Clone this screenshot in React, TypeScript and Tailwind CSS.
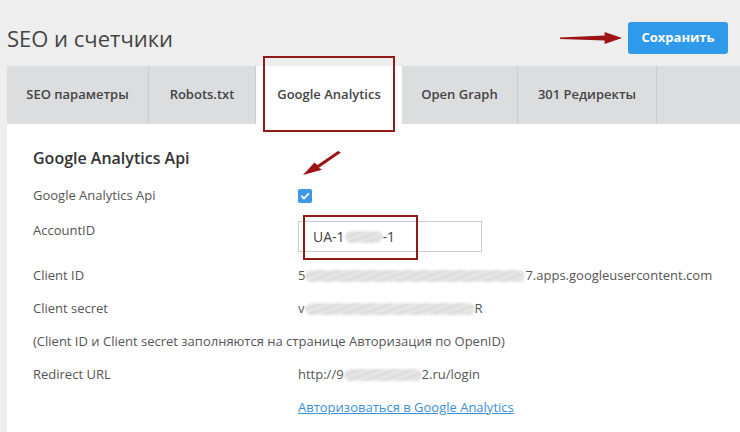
import React from 'react';

const font = { fontFamily: '"Open Sans", "Noto Sans", sans-serif' };

// blurred-out (redacted) piece of a value
function Smudge({ w }: { w: number }) {
  return (
    <span
      className="inline-block h-[12px] align-middle rounded-full bg-[repeating-linear-gradient(160deg,#d6d6d6_0px,#ececec_3px,#dadada_6px)] blur-[1px]"
      style={{ width: w }}
    />
  );
}

function RedArrow({ className, d }: { className: string; d: string }) {
  return (
    <svg className={className} viewBox="0 0 100 100" preserveAspectRatio="none">
      <path d={d} fill="#9c1414" />
    </svg>
  );
}

const tabs = [
  { label: 'SEO параметры', w: 'w-[142px]' },
  { label: 'Robots.txt', w: 'w-[107px]' },
  { label: 'Google Analytics', w: 'w-[146px]', active: true },
  { label: 'Open Graph', w: 'w-[116px]' },
  { label: '301 Редиректы', w: 'w-[139px]' },
];

function Row({ label, children, h = 'h-[33px]' }: { label: string; children?: React.ReactNode; h?: string }) {
  return (
    <div className={`flex items-center ${h}`}>
      <div className="w-[265px] shrink-0 text-[13px] text-[#555]">{label}</div>
      <div className="flex items-center text-[13px] text-[#555]">{children}</div>
    </div>
  );
}

export default function App() {
  return (
    <div className="w-[740px] h-[432px] overflow-hidden bg-[#eeeeee]" style={font}>
      {/* Header */}
      <div className="flex items-center justify-between h-[66px] pl-[7px] pr-[12px] pt-[14px] pb-[4px]">
        <h1 className="text-[22px] text-[#444] font-normal leading-none">SEO и счетчики</h1>
        <div className="flex items-center gap-[6px]">
          <RedArrow className="w-[62px] h-[12px]" d="M0 45 L72 30 L72 0 L100 50 L72 100 L72 70 L0 58 Z" />
          <button className="w-[100px] h-[32px] rounded-[3px] bg-[#2f9ae9] text-white text-[13px] font-bold">
            Сохранить
          </button>
        </div>
      </div>

      {/* Tabs */}
      <div className="ml-[7px] flex h-[58px] bg-[#dcdddf]">
        {tabs.map((t) =>
          t.active ? (
            <div key={t.label} className={`${t.w} relative bg-white flex items-center justify-center text-[13px] font-semibold text-[#444]`}>
              {t.label}
              <div className="absolute left-[7px] top-[-10px] w-[132px] h-[76px] border-2 border-[#8e1a1a]" />
            </div>
          ) : (
            <div key={t.label} className={`${t.w} flex items-center justify-center text-[13px] font-semibold text-[#444] border-r border-[#cbccce]`}>
              {t.label}
            </div>
          )
        )}
      </div>

      {/* Content */}
      <div className="ml-[7px] h-[308px] bg-white pl-[26px] pt-[22px]">
        <h2 className="h-[24px] leading-[24px] text-[16px] font-semibold text-[#333]">Google Analytics Api</h2>
        <div className="h-[9px]" />
        <Row label="Google Analytics Api" h="h-[34px]">
          <span className="relative inline-flex items-center justify-center w-[14px] h-[14px] rounded-[2px] bg-[#3d96e8]">
            <svg viewBox="0 0 12 12" className="w-[10px] h-[10px]">
              <path d="M2 6.2 L4.8 9 L10 3.4" fill="none" stroke="white" strokeWidth="2.2" strokeLinecap="round" strokeLinejoin="round" />
            </svg>
            <RedArrow className="absolute left-[5px] top-[-38px] w-[38px] h-[24px]" d="M100 6 L92 0 L38 58 L30 48 L0 100 L50 78 L42 70 Z" />
          </span>
        </Row>
        <div className="flex items-start h-[46px] pt-[8px]">
          <div className="w-[265px] shrink-0 text-[13px] leading-[18px] text-[#555]">AccountID</div>
          <div className="relative w-[184px] h-[31px] border border-[#cccccc] flex items-center pl-[14px] text-[14px] text-[#444]">
            UA-1<Smudge w={38} />-1
            <div className="absolute left-[4px] top-[-7px] w-[115px] h-[45px] border-2 border-[#8e1a1a]" />
          </div>
        </div>
        <Row label="Client ID">
          5<Smudge w={220} />7.apps.googleusercontent.com
        </Row>
        <Row label="Client secret">
          v<Smudge w={170} />R
        </Row>
        <div className="h-[33px] flex items-center text-[13px] text-[#555]">
          (Client ID и Client secret заполняются на странице Авторизация по OpenID)
        </div>
        <Row label="Redirect URL">
          http://9<Smudge w={78} />2.ru/login
        </Row>
        <Row label="">
          <a className="text-[#3a8fd6] underline cursor-pointer">Авторизоваться в Google Analytics</a>
        </Row>
      </div>
    </div>
  );
}
